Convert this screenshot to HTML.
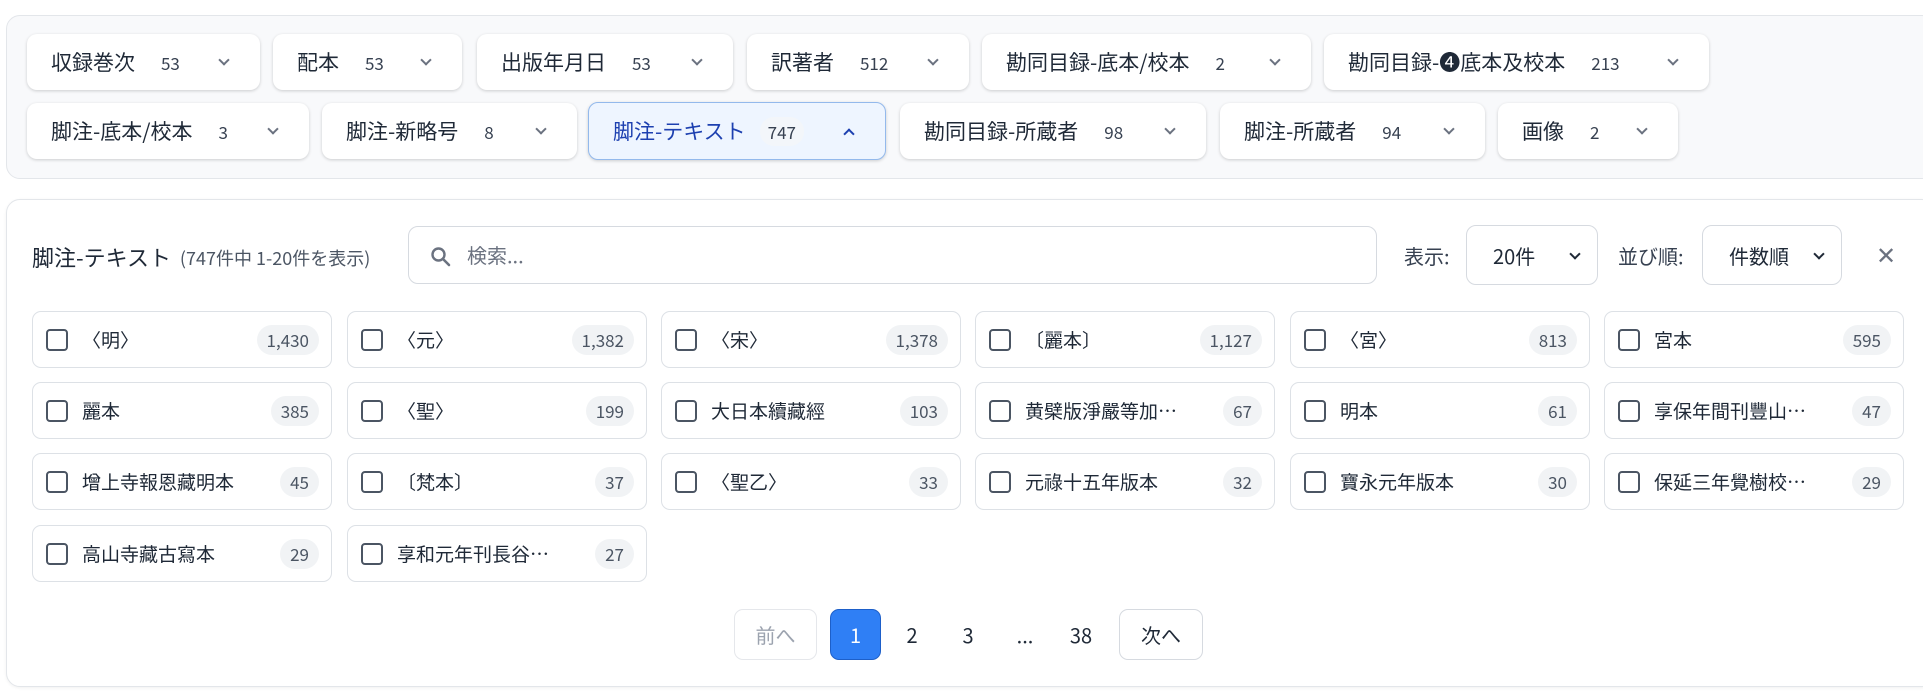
<!DOCTYPE html>
<html><head><meta charset="utf-8"><style>
*{box-sizing:border-box;margin:0;padding:0}
body{width:1923px;height:691px;background:#fff;font-family:"Noto Sans CJK JP","Liberation Sans",sans-serif;color:#1f2937;position:relative;overflow:hidden}
.abs{position:absolute}
.p1{left:6px;top:15px;width:1930px;height:164px;background:#f8f9fb;border:1px solid #e3e6ea;border-radius:14px}
.chip{position:absolute;height:56px;background:#fff;border-radius:10px;box-shadow:0 1px 3px rgba(0,0,0,.18);display:flex;align-items:center;padding-left:24px;font-size:21px;line-height:1;color:#1f2937;white-space:nowrap}
.chip .c{font-size:17px;margin-left:26px;color:#374151}
.chip .v{position:absolute;right:32px;top:22px;width:8px;height:8px;border-right:2px solid #6b7280;border-bottom:2px solid #6b7280;transform:rotate(45deg)}
.chip.act{background:#eef5ff;border:1px solid #93b9ec;color:#1d40b0}
.chip.act .c{background:#f3f6fa;border-radius:14px;padding:6px 8px;margin-left:14px}
.chip.act .v{top:27px;border-color:#1d40b0;transform:rotate(-135deg)}
.p2{left:6px;top:199px;width:1930px;height:488px;background:#fff;border:1px solid #e3e6ea;border-radius:14px;box-shadow:0 1px 3px rgba(0,0,0,.06)}
.item{position:absolute;width:300px;height:57px;border:1px solid #dde1e6;border-radius:9px;display:flex;align-items:center;padding-left:13px;font-size:19px;line-height:1;white-space:nowrap}
.item .cb{width:22px;height:22px;border:2px solid #4b5563;border-radius:4px;margin-right:14px;flex:none}
.item .n{position:absolute;right:12px;top:13px;height:30px;line-height:30px;padding:0 10px;background:#f1f3f5;border-radius:15px;font-size:17px;color:#4b5563}
.sel{position:absolute;height:60px;border:1px solid #d6dae0;border-radius:10px;font-size:20px;display:flex;align-items:center;padding-left:26px}
.sel .v{position:absolute;right:18px;top:24px;width:8px;height:8px;border-right:2px solid #1f2937;border-bottom:2px solid #1f2937;transform:rotate(45deg)}
.pg{position:absolute;top:609px;height:51px;display:flex;align-items:center;justify-content:center;font-size:20px;border-radius:9px}
</style></head><body>
<div class="abs p1"></div>
<div class="chip" style="left:27px;top:34px;width:233px">収録巻次<span class="c">53</span><span class="v"></span></div>
<div class="chip" style="left:273px;top:34px;width:189px">配本<span class="c">53</span><span class="v"></span></div>
<div class="chip" style="left:477px;top:34px;width:256px">出版年月日<span class="c">53</span><span class="v"></span></div>
<div class="chip" style="left:747px;top:34px;width:222px">訳著者<span class="c">512</span><span class="v"></span></div>
<div class="chip" style="left:982px;top:34px;width:329px">勘同目録-底本/校本<span class="c">2</span><span class="v"></span></div>
<div class="chip" style="left:1324px;top:34px;width:385px">勘同目録-❹底本及校本<span class="c">213</span><span class="v"></span></div>
<div class="chip" style="left:27px;top:103px;width:282px">脚注-底本/校本<span class="c">3</span><span class="v"></span></div>
<div class="chip" style="left:322px;top:103px;width:255px">脚注-新略号<span class="c">8</span><span class="v"></span></div>
<div class="chip act" style="left:588px;top:102px;width:298px;height:58px">脚注-テキスト<span class="c">747</span><span class="v"></span></div>
<div class="chip" style="left:900px;top:103px;width:306px">勘同目録-所蔵者<span class="c">98</span><span class="v"></span></div>
<div class="chip" style="left:1220px;top:103px;width:265px">脚注-所蔵者<span class="c">94</span><span class="v"></span></div>
<div class="chip" style="left:1498px;top:103px;width:180px">画像<span class="c">2</span><span class="v"></span></div>

<div class="abs p2"></div>
<div class="abs" style="left:32px;top:241px;font-size:22px;white-space:nowrap">脚注-テキスト <span style="font-size:18px;color:#4b5563;margin-left:4px;position:relative;top:-1px">(747件中 1-20件を表示)</span></div>
<div class="abs" style="left:408px;top:226px;width:969px;height:58px;border:1px solid #d6dae0;border-radius:10px;font-size:20px;color:#6b7280;padding:13px 0 0 58px">検索...
<svg class="abs" style="left:21px;top:19px" width="22" height="22" viewBox="0 0 22 22"><circle cx="8.5" cy="8.5" r="6" fill="none" stroke="#6b7280" stroke-width="2.4"/><line x1="13" y1="13" x2="19" y2="19" stroke="#6b7280" stroke-width="2.6" stroke-linecap="round"/></svg></div>
<div class="abs" style="left:1404px;top:241px;font-size:20px;color:#374151">表示:</div>
<div class="sel" style="left:1466px;top:225px;width:132px">20件<span class="v"></span></div>
<div class="abs" style="left:1618px;top:241px;font-size:20px;color:#374151">並び順:</div>
<div class="sel" style="left:1702px;top:225px;width:140px">件数順<span class="v"></span></div>
<div class="abs" style="left:1876px;top:236px;font-size:24px;color:#6b7280">✕</div>

<div class="item" style="left:32px;top:311px"><span class="cb"></span>〈明〉<span class="n">1,430</span></div>
<div class="item" style="left:347px;top:311px"><span class="cb"></span>〈元〉<span class="n">1,382</span></div>
<div class="item" style="left:661px;top:311px"><span class="cb"></span>〈宋〉<span class="n">1,378</span></div>
<div class="item" style="left:975px;top:311px"><span class="cb"></span>〔麗本〕<span class="n">1,127</span></div>
<div class="item" style="left:1290px;top:311px"><span class="cb"></span>〈宮〉<span class="n">813</span></div>
<div class="item" style="left:1604px;top:311px"><span class="cb"></span>宮本<span class="n">595</span></div>
<div class="item" style="left:32px;top:382px"><span class="cb"></span>麗本<span class="n">385</span></div>
<div class="item" style="left:347px;top:382px"><span class="cb"></span>〈聖〉<span class="n">199</span></div>
<div class="item" style="left:661px;top:382px"><span class="cb"></span>大日本續藏經<span class="n">103</span></div>
<div class="item" style="left:975px;top:382px"><span class="cb"></span>黄檗版淨嚴等加…<span class="n">67</span></div>
<div class="item" style="left:1290px;top:382px"><span class="cb"></span>明本<span class="n">61</span></div>
<div class="item" style="left:1604px;top:382px"><span class="cb"></span>享保年間刊豐山…<span class="n">47</span></div>
<div class="item" style="left:32px;top:453px"><span class="cb"></span>增上寺報恩藏明本<span class="n">45</span></div>
<div class="item" style="left:347px;top:453px"><span class="cb"></span>〔梵本〕<span class="n">37</span></div>
<div class="item" style="left:661px;top:453px"><span class="cb"></span>〈聖乙〉<span class="n">33</span></div>
<div class="item" style="left:975px;top:453px"><span class="cb"></span>元祿十五年版本<span class="n">32</span></div>
<div class="item" style="left:1290px;top:453px"><span class="cb"></span>寶永元年版本<span class="n">30</span></div>
<div class="item" style="left:1604px;top:453px"><span class="cb"></span>保延三年覺樹校…<span class="n">29</span></div>
<div class="item" style="left:32px;top:525px"><span class="cb"></span>高山寺藏古寫本<span class="n">29</span></div>
<div class="item" style="left:347px;top:525px"><span class="cb"></span>享和元年刊長谷…<span class="n">27</span></div>

<div class="pg" style="left:734px;width:83px;border:1px solid #e5e7eb;color:#9ca3af">前へ</div>
<div class="pg" style="left:830px;width:51px;background:#2f7ff5;border:1px solid #1d5fc9;color:#fff">1</div>
<div class="pg" style="left:892px;width:40px">2</div>
<div class="pg" style="left:948px;width:40px">3</div>
<div class="pg" style="left:1005px;width:40px">...</div>
<div class="pg" style="left:1061px;width:40px">38</div>
<div class="pg" style="left:1119px;width:84px;border:1px solid #d6dae0">次へ</div>
</body></html>
